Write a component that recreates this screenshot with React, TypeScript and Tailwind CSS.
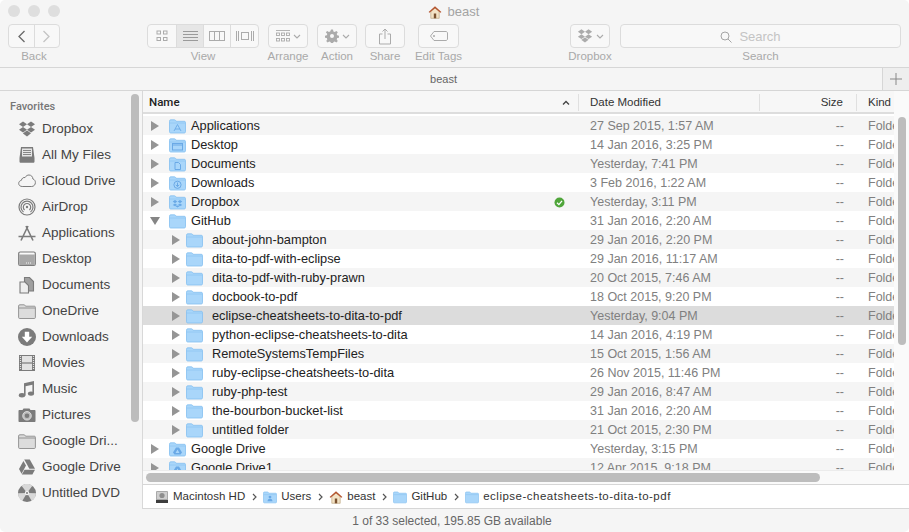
import React from "react";

function DropboxGlyph({ size = 18, color = "#777" }: { size?: number; color?: string }) {
  return (
    <svg width={size} height={size} viewBox="0 0 18 18" fill={color}>
      <path d="M5 1.5 9 4.2 5 7 1 4.2Z" />
      <path d="M13 1.5 17 4.2 13 7 9 4.2Z" />
      <path d="M5 7 9 9.8 5 12.5 1 9.8Z" />
      <path d="M13 7 17 9.8 13 12.5 9 9.8Z" />
      <path d="M5 13.2 9 10.6 13 13.2 9 16.4 5 13.6Z" />
    </svg>
  );
}

type Emblem = "apps" | "desktop" | "docs" | "downloads" | "dropbox" | "gdrive" | "users" | null;

function Folder({ emblem = null, w = 17 }: { emblem?: Emblem; w?: number }) {
  const c = "#6aa9e6";
  return (
    <svg width={w} height={15} viewBox="0 0 17 15" className="shrink-0">
      <path d="M.5 2.2C.5 1.3 1 .8 1.8.8h3.6c.7 0 1 .3 1.3.8l.4.7h8.2c.7 0 1.2.5 1.2 1.2v9.3c0 .7-.5 1.2-1.2 1.2H1.7c-.7 0-1.2-.5-1.2-1.2Z" fill="#a9d6fa" stroke="#84bff0" strokeWidth="0.8" />
      <path d="M.8 4h15.4" stroke="#8fc6f2" strokeWidth="0.8" />
      {emblem === "apps" && <path d="M5 12 8.5 5.5 12 12M6 10h5" fill="none" stroke={c} strokeWidth="0.9" />}
      {emblem === "desktop" && (
        <g fill="none" stroke={c} strokeWidth="1">
          <rect x="3.5" y="5.5" width="10" height="6.5" />
          <path d="M3.5 7h10" />
        </g>
      )}
      {emblem === "docs" && <path d="M6 5.5h3.5L11.5 7.5v5H6Z" fill="none" stroke={c} strokeWidth="1" />}
      {emblem === "downloads" && (
        <g fill="none" stroke={c} strokeWidth="1">
          <circle cx="8.5" cy="8.8" r="3.6" />
          <path d="M8.5 6.5v4M6.8 8.8l1.7 1.8 1.7-1.8" />
        </g>
      )}
      {emblem === "dropbox" && (
        <g fill={c}>
          <path d="M6 5 8.3 6.6 6 8.2 3.7 6.6Z" />
          <path d="M11 5 13.3 6.6 11 8.2 8.7 6.6Z" />
          <path d="M6 8.4 8.3 10 6 11.2 3.7 10Z" />
          <path d="M11 8.4 13.3 10 11 11.2 8.7 10Z" />
          <path d="M6.5 11.3 8.5 10.4l2 .9-2 1.3Z" />
        </g>
      )}
      {emblem === "gdrive" && <path d="M7 5.5h3l3 5-1.5 2h-6L4 10.5ZM8.5 7.5l-2 3.5h4Z" fill={c} fillRule="evenodd" />}
      {emblem === "users" && (
        <g fill={c}>
          <circle cx="8.5" cy="7" r="1.7" />
          <path d="M5.5 12c0-2 1.3-3 3-3s3 1 3 3Z" />
        </g>
      )}
    </svg>
  );
}

function House() {
  return (
    <svg width="14" height="14" viewBox="0 0 14 14" className="shrink-0">
      <path d="M2.8 6.5v6.8h8.4V6.5L7 3Z" fill="#f3e3c6" stroke="#b39a70" strokeWidth="0.6" />
      <path d="M.6 7 7 1.2 13.4 7l-1 .8L7 3.2 1.6 7.8Z" fill="#b5552f" />
      <rect x="5.8" y="8.5" width="2.4" height="4.8" fill="#7a5230" />
    </svg>
  );
}

function HardDisk() {
  return (
    <svg width="14" height="14" viewBox="0 0 14 14" className="shrink-0">
      <rect x="1" y="1" width="12" height="12" rx="1" fill="#a9a9a9" />
      <rect x="2" y="2" width="10" height="7" fill="#cfcfcf" />
      <circle cx="7" cy="5.5" r="2.6" fill="#8e8e8e" />
      <rect x="1" y="10" width="12" height="3" fill="#3d3d3d" />
    </svg>
  );
}

const G = "#7b7b7b";
const sideIcons: Record<string, React.ReactNode> = {
  dropbox: <DropboxGlyph size={18} color={G} />,
  files: (
    <svg width="18" height="18" viewBox="0 0 18 18">
      <path d="M3 1h12l1.5 11v3.5c0 .8-.5 1.3-1.3 1.3H2.8c-.8 0-1.3-.5-1.3-1.3V12Z" fill={G} />
      <rect x="4" y="2.5" width="10" height="8" fill="#e5e5e5" />
      <path d="M5 4.5h8M5 6.5h8M5 8.5h8" stroke={G} strokeWidth="0.9" />
    </svg>
  ),
  cloud: (
    <svg width="18" height="18" viewBox="0 0 18 18">
      <path d="M4.2 14.5c-2 0-3.5-1.3-3.5-3.1 0-1.6 1.1-2.8 2.6-3C3.8 6.3 5.5 5 7 5.6 8 3.8 9.5 3 11 3c2.2 0 3.8 1.7 3.9 4 1.5.4 2.5 1.8 2.5 3.5 0 2.2-1.6 4-3.7 4Z" fill="none" stroke={G} strokeWidth="1" />
    </svg>
  ),
  airdrop: (
    <svg width="18" height="18" viewBox="0 0 18 18" fill="none" stroke={G}>
      <circle cx="9" cy="9" r="8" strokeWidth="1.2" />
      <path d="M5.5 14A6 6 0 1 1 12.5 14" strokeWidth="1.2" />
      <path d="M6.6 12A3.7 3.7 0 1 1 11.4 12" strokeWidth="1.2" />
      <circle cx="9" cy="9" r="1.2" fill={G} stroke="none" />
    </svg>
  ),
  apps: (
    <svg width="18" height="18" viewBox="0 0 18 18" fill="none" stroke={G} strokeWidth="1.6">
      <path d="M3 16.5 10 2M15 16.5 8 2M.5 12.5h17" />
    </svg>
  ),
  desktop: (
    <svg width="18" height="18" viewBox="0 0 18 18">
      <rect x="0.7" y="2" width="16.6" height="13.5" rx="1.5" fill="#fff" fillOpacity="0.5" stroke={G} strokeWidth="1.2" />
      <rect x="1.2" y="4.5" width="15.6" height="10.5" fill="#a8a8a8" />
      <path d="M8 13h.9M10 13h.9M12 13h.9" stroke="#fff" strokeWidth="1.2" />
    </svg>
  ),
  documents: (
    <svg width="18" height="18" viewBox="0 0 18 18" fill="#eee" stroke={G} strokeWidth="1.1">
      <path d="M6.5 1.5h5l4 4v9.5h-9Z" fill="#a0a0a0" />
      <path d="M2 6h5l3.5 3.5v7.5H2Z" />
    </svg>
  ),
  folder: (
    <svg width="18" height="15" viewBox="0 0 18 15">
      <path d="M.6 2c0-.7.4-1.2 1.2-1.2H6c.6 0 .9.3 1.1.7l.4.7h8.8c.7 0 1.1.4 1.1 1.1v10.1c0 .7-.4 1.1-1.1 1.1H1.7c-.7 0-1.1-.4-1.1-1.1Z" fill="#dcdcdc" stroke="#8b8b8b" strokeWidth="0.9" />
      <path d="M.8 4h16.4" stroke="#8b8b8b" strokeWidth="0.9" />
    </svg>
  ),
  downloads: (
    <svg width="18" height="18" viewBox="0 0 18 18">
      <circle cx="9" cy="9" r="9" fill={G} />
      <path d="M6.8 3.8h4.4v5h3L9 14.5 3.8 8.8h3Z" fill="#fff" />
    </svg>
  ),
  movies: (
    <svg width="18" height="18" viewBox="0 0 18 18">
      <rect x="1" y="1" width="16" height="16" fill={G} />
      <rect x="4" y="2" width="10" height="6.4" fill="#e2e2e2" />
      <rect x="4" y="9.6" width="10" height="6.4" fill="#e2e2e2" />
      <path d="M2.5 2v14M15.5 2v14" stroke="#e2e2e2" strokeWidth="1.2" strokeDasharray="1 1" />
    </svg>
  ),
  music: (
    <svg width="18" height="18" viewBox="0 0 18 18" fill={G}>
      <path d="M6 3.2 16 1v12.5h-1.6V4.8L7.6 6.2V15.5H6Z" />
      <ellipse cx="4" cy="15.3" rx="3.2" ry="2.2" />
      <ellipse cx="13" cy="13.6" rx="3.1" ry="2.2" />
    </svg>
  ),
  pictures: (
    <svg width="18" height="18" viewBox="0 0 18 18">
      <path d="M.5 5c0-.6.4-1 1-1h3l1-1.5h6L12.5 4h4c.6 0 1 .4 1 1v10c0 .6-.4 1-1 1h-15c-.6 0-1-.4-1-1Z" fill={G} />
      <circle cx="9" cy="9.8" r="4.3" fill="#bbb" stroke="#e8e8e8" strokeWidth="0.8" />
      <circle cx="9" cy="9.8" r="2.3" fill={G} />
    </svg>
  ),
  gdrive: (
    <svg width="18" height="18" viewBox="0 0 18 18" fill={G}>
      <path d="M6.2 1.5h5.6L17 10.8h-5.6Z" />
      <path d="M5.4 3 8 7.5 3.6 15.8 1 11Z" />
      <path d="M6.5 11.8H17l-2.6 4.7H3.8Z" />
    </svg>
  ),
  dvd: (
    <svg width="18" height="18" viewBox="0 0 18 18">
      <circle cx="9" cy="9" r="9" fill={G} />
      <path d="M9 9 3.6 1.800A9 9 0 0 1 14.4 1.800ZM9 9l9 .2A9 9 0 0 1 13.6 16.800ZM9 9 4.4 16.800A9 9 0 0 1 0 9.200Z" fill="#d8d8d8" />
      <circle cx="9" cy="9" r="2.2" fill="#f0f0f0" />
      <circle cx="9" cy="9" r="1" fill={G} />
    </svg>
  ),
};

const sidebar: [string, string][] = [
  ["dropbox", "Dropbox"],
  ["files", "All My Files"],
  ["cloud", "iCloud Drive"],
  ["airdrop", "AirDrop"],
  ["apps", "Applications"],
  ["desktop", "Desktop"],
  ["documents", "Documents"],
  ["folder", "OneDrive"],
  ["downloads", "Downloads"],
  ["movies", "Movies"],
  ["music", "Music"],
  ["pictures", "Pictures"],
  ["folder", "Google Dri..."],
  ["gdrive", "Google Drive"],
  ["dvd", "Untitled DVD"],
];

type Row = { name: string; date: string; level: 0 | 1; emblem?: Emblem; open?: boolean; synced?: boolean; selected?: boolean };
const rows: Row[] = [
  { name: "Applications", date: "27 Sep 2015, 1:57 AM", level: 0, emblem: "apps" },
  { name: "Desktop", date: "14 Jan 2016, 3:25 PM", level: 0, emblem: "desktop" },
  { name: "Documents", date: "Yesterday, 7:41 PM", level: 0, emblem: "docs" },
  { name: "Downloads", date: "3 Feb 2016, 1:22 AM", level: 0, emblem: "downloads" },
  { name: "Dropbox", date: "Yesterday, 3:11 PM", level: 0, emblem: "dropbox", synced: true },
  { name: "GitHub", date: "31 Jan 2016, 2:20 AM", level: 0, open: true },
  { name: "about-john-bampton", date: "29 Jan 2016, 2:20 PM", level: 1 },
  { name: "dita-to-pdf-with-eclipse", date: "29 Jan 2016, 11:17 AM", level: 1 },
  { name: "dita-to-pdf-with-ruby-prawn", date: "20 Oct 2015, 7:46 AM", level: 1 },
  { name: "docbook-to-pdf", date: "18 Oct 2015, 9:20 PM", level: 1 },
  { name: "eclipse-cheatsheets-to-dita-to-pdf", date: "Yesterday, 9:04 PM", level: 1, selected: true },
  { name: "python-eclipse-cheatsheets-to-dita", date: "14 Jan 2016, 4:19 PM", level: 1 },
  { name: "RemoteSystemsTempFiles", date: "15 Oct 2015, 1:56 AM", level: 1 },
  { name: "ruby-eclipse-cheatsheets-to-dita", date: "26 Nov 2015, 11:46 PM", level: 1 },
  { name: "ruby-php-test", date: "29 Jan 2016, 8:47 AM", level: 1 },
  { name: "the-bourbon-bucket-list", date: "31 Jan 2016, 2:20 AM", level: 1 },
  { name: "untitled folder", date: "21 Oct 2015, 2:30 PM", level: 1 },
  { name: "Google Drive", date: "Yesterday, 3:15 PM", level: 0, emblem: "gdrive" },
  { name: "Google Drive1", date: "12 Apr 2015, 9:18 PM", level: 0, emblem: "gdrive" },
];

const T = "#ababab";

function Tool({ label, width, className = "", children }: { label: string; width: number; className?: string; children: React.ReactNode }) {
  return (
    <div className={`flex flex-col items-center ${className}`} style={{ width }}>
      {children}
      <div className="h-[16px] whitespace-nowrap text-[11.5px] leading-[16px] text-[#a9a9a9]">{label}</div>
    </div>
  );
}

const btn = "flex h-[24px] w-full items-center justify-center rounded-[4px] border border-[#dcdcdc] bg-[#f8f8f8]";

function Chevron() {
  return (
    <svg width="8" height="5" viewBox="0 0 8 5" fill="none" stroke={T} strokeWidth="1.1" className="ml-[3px]">
      <path d="M1 1 4 4 7 1" />
    </svg>
  );
}

function Triangle({ open }: { open?: boolean }) {
  return open ? (
    <svg width="10" height="8" viewBox="0 0 10 8" className="shrink-0">
      <path d="M0 0h10L5 8Z" fill="#858585" />
    </svg>
  ) : (
    <svg width="8" height="10" viewBox="0 0 8 10" className="shrink-0">
      <path d="M0 0 8 5 0 10Z" fill="#959595" />
    </svg>
  );
}

function Crumb({ icon, text, className = "" }: { icon: React.ReactNode; text: string; className?: string }) {
  return (
    <div className="flex items-center gap-[4px] whitespace-nowrap">
      {icon}
      <span className={className}>{text}</span>
    </div>
  );
}

function CrumbSep() {
  return (
    <svg width="5" height="8" viewBox="0 0 5 8" fill="none" stroke="#555" strokeWidth="1.2" className="mx-[6.5px] shrink-0">
      <path d="M1 1 4 4 1 7" />
    </svg>
  );
}

export default function App() {
  return (
    <div className="flex h-[532px] w-[909px] flex-col overflow-hidden rounded-[5px] bg-[#f5f5f5] font-['Liberation_Sans',sans-serif]">
      {/* Title bar */}
      <div className="grid h-[24px] shrink-0 grid-cols-[1fr_auto_1fr] pt-[5px]">
        <div className="flex gap-[8px] pl-[8px]">
          <div className="h-[12px] w-[12px] rounded-full bg-[#dedede]" />
          <div className="h-[12px] w-[12px] rounded-full bg-[#dedede]" />
          <div className="h-[12px] w-[12px] rounded-full bg-[#dedede]" />
        </div>
        <div className="flex h-[14px] items-center gap-[6px] pr-[2px] text-[13px] text-[#a3a3a3]">
          <House />
          <span>beast</span>
        </div>
        <div />
      </div>

      {/* Toolbar */}
      <div className="flex h-[44px] shrink-0 items-start border-b border-[#d6d6d6] pl-[8px]">
        <Tool label="Back" width={52}>
          <div className="flex h-[24px] w-full rounded-[4px] border border-[#dcdcdc] bg-[#f8f8f8]">
            <div className="flex flex-1 items-center justify-center border-r border-[#dcdcdc]">
              <svg width="9" height="13" viewBox="0 0 9 13" fill="none" stroke="#6a6a6a" strokeWidth="1.3"><path d="M7.5 1 2 6.5 7.5 12" /></svg>
            </div>
            <div className="flex flex-1 items-center justify-center">
              <svg width="9" height="13" viewBox="0 0 9 13" fill="none" stroke="#c4c4c4" strokeWidth="1.3"><path d="M1.5 1 7 6.5 1.5 12" /></svg>
            </div>
          </div>
        </Tool>
        <Tool label="View" width={112} className="ml-[87px]">
          <div className="flex h-[24px] w-full overflow-hidden rounded-[4px] border border-[#dcdcdc] bg-[#f8f8f8]">
            <div className="flex w-[29px] items-center justify-center border-r border-[#dcdcdc]">
              <svg width="12" height="12" viewBox="0 0 12 12" fill="none" stroke={T}>
                <rect x="1" y="1" width="3.5" height="3" /><rect x="7.5" y="1" width="3.5" height="3" />
                <rect x="1" y="7.5" width="3.5" height="3" /><rect x="7.5" y="7.5" width="3.5" height="3" />
              </svg>
            </div>
            <div className="flex w-[27px] items-center justify-center border-r border-[#dcdcdc] bg-[#e6e6e6]">
              <svg width="15" height="10" viewBox="0 0 15 10" stroke="#9a9a9a"><path d="M0 .5h15M0 3.5h15M0 6.5h15M0 9.5h15" /></svg>
            </div>
            <div className="flex w-[27px] items-center justify-center border-r border-[#dcdcdc]">
              <svg width="16" height="10" viewBox="0 0 16 10" fill="none" stroke={T}><rect x=".5" y=".5" width="15" height="9" /><path d="M5.5 0v10M10.5 0v10" /></svg>
            </div>
            <div className="flex flex-1 items-center justify-center">
              <svg width="18" height="10" viewBox="0 0 18 10" fill="none" stroke={T}><rect x="5.5" y="1.5" width="7" height="7" /><path d="M.5 0v10M2.5 0v10M15.5 0v10M17.5 0v10" /></svg>
            </div>
          </div>
        </Tool>
        <Tool label="Arrange" width={40} className="ml-[9px]">
          <div className={btn}>
            <svg width="14" height="12" viewBox="0 0 14 12" fill="none" stroke={T} strokeWidth="0.9">
              <path d="M0 .5h14" />
              <rect x=".5" y="3" width="3" height="2.5" /><rect x="5.5" y="3" width="3" height="2.5" /><rect x="10.5" y="3" width="3" height="2.5" />
              <rect x=".5" y="8.5" width="3" height="2.5" /><rect x="5.5" y="8.5" width="3" height="2.5" /><rect x="10.5" y="8.5" width="3" height="2.5" />
            </svg>
            <Chevron />
          </div>
        </Tool>
        <Tool label="Action" width={40} className="ml-[9px]">
          <div className={btn}>
            <svg width="14" height="14" viewBox="0 0 14 14" fill={T}>
              <path fillRule="evenodd" d="M6 .5h2l.4 2 1.3.5 1.7-1.1 1.4 1.4-1.100 1.7.5 1.3 2 .4v2l-2 .4-.5 1.3 1.100 1.7-1.4 1.4-1.7-1.1-1.3.5-.4 2H6l-.4-2-1.3-.5-1.7 1.100-1.4-1.4 1.100-1.7-.5-1.3-2-.4v-2l2-.4.5-1.3L.8 3.3 2.200 1.900l1.7 1.100L5.200 2.500ZM7 5a2 2 0 1 0 0 4 2 2 0 0 0 0-4Z" />
            </svg>
            <Chevron />
          </div>
        </Tool>
        <Tool label="Share" width={40} className="ml-[8px]">
          <div className={btn}>
            <svg width="12" height="17" viewBox="0 0 12 17" fill="none" stroke={T}>
              <path d="M6 11V1M3.5 3.5 6 1l2.5 2.5M3.500 6H.5v10h11V6h-3" />
            </svg>
          </div>
        </Tool>
        <Tool label="Edit Tags" width={41} className="ml-[13px]">
          <div className={btn}>
            <svg width="18" height="10" viewBox="0 0 18 10" fill="none" stroke={T}>
              <path d="M4 .5h12c.8 0 1.5.7 1.5 1.500v6c0 .8-.7 1.500-1.500 1.500H4L.5 5Z" />
              <circle cx="4" cy="5" r=".6" fill={T} />
            </svg>
          </div>
        </Tool>
        <Tool label="Dropbox" width={40} className="ml-[111px]">
          <div className={btn}>
            <DropboxGlyph size={16} color={T} />
            <Chevron />
          </div>
        </Tool>
        <Tool label="Search" width={281} className="ml-[10px]">
          <div className={`${btn} gap-[7px] pt-[1px] pr-[20px] text-[13px] text-[#c4c4c4]`}>
            <svg width="12" height="12" viewBox="0 0 12 12" fill="none" stroke="#a5a5a5" strokeWidth="1"><circle cx="5" cy="5" r="4" /><path d="m8 8 3.5 3.5" /></svg>
            <span>Search</span>
          </div>
        </Tool>
      </div>

      {/* Tab bar */}
      <div className="flex h-[23px] shrink-0 border-b border-[#d6d6d6]">
        <div className="flex flex-1 items-center justify-center pl-[5px] text-[11px] text-[#666]">beast</div>
        <div className="flex w-[27px] items-center justify-center border-l border-[#d6d6d6] bg-[#eeeeee]">
          <svg width="12" height="12" viewBox="0 0 12 12" stroke="#888"><path d="M6 0v12M0 6h12" /></svg>
        </div>
      </div>

      {/* Body */}
      <div className="flex min-h-0 flex-1">
        {/* Sidebar */}
        <div className="relative flex w-[143px] shrink-0 flex-col border-r border-[#d8d8d8] bg-[#f5f5f5] pt-[9px]">
          <div className="mb-[2px] pl-[10px] font-['Roboto',sans-serif] text-[11px] leading-[14px] font-medium text-[#777]">Favorites</div>
          <div className="flex flex-col">
            {sidebar.map(([icon, label], i) => (
              <div key={i} className="flex h-[26px] items-center pl-[18px] text-[13.5px] text-[#444]">
                <span className="flex w-[18px] shrink-0 justify-center">{sideIcons[icon]}</span>
                <span className="ml-[6px] whitespace-nowrap">{label}</span>
              </div>
            ))}
          </div>
          <div className="absolute top-[3px] left-[131px] h-[328px] w-[8px] rounded-full bg-[#bcbcbc]" />
        </div>

        {/* List */}
        <div className="relative flex min-w-0 flex-1 flex-col bg-white">
          <div className="flex h-[23px] w-[751px] shrink-0 items-center border-b-2 border-[#dddddd] bg-[#f7f7f7] pt-[2px] text-[11.5px] text-[#333]">
            <div className="flex h-[17px] w-[436px] items-center justify-between border-r border-[#e0e0e0] pr-[8px] pl-[6px]">
              <span className="font-['Roboto',sans-serif] font-medium text-[#222]">Name</span>
              <svg width="8" height="5" viewBox="0 0 8 5" fill="none" stroke="#444" strokeWidth="1.3"><path d="M1 4.5 4 1.5 7 4.5" /></svg>
            </div>
            <div className="flex h-[17px] w-[181px] items-center border-r border-[#e0e0e0] pl-[11px]">Date Modified</div>
            <div className="flex h-[17px] w-[97px] items-center justify-end border-r border-[#e0e0e0] pr-[13px]">Size</div>
            <div className="pl-[11px]">Kind</div>
          </div>
          <div className="h-[356px] w-[751px] shrink-0 overflow-hidden pt-[2px]">
            {rows.map((r, i) => (
              <div
                key={r.name}
                className={`flex h-[19px] items-center pt-[1px] text-[12.5px] ${r.selected ? "bg-[#dcdcdc]" : i % 2 === 0 ? "bg-[#f5f5f5]" : "bg-white"}`}
              >
                <div className="flex w-[436px] shrink-0 items-center">
                  <span className={`flex justify-center ${r.level === 1 ? "ml-[28px] w-[10px]" : "ml-[7px] w-[10px]"}`}>
                    <Triangle open={r.open} />
                  </span>
                  <span className={r.level === 1 ? "ml-[5px]" : "ml-[9px]"}>
                    <Folder emblem={r.emblem ?? null} />
                  </span>
                  <span className={`whitespace-nowrap text-[12.8px] text-[#222] ${r.level === 1 ? "ml-[9px]" : "ml-[5px]"}`}>{r.name}</span>
                  {r.synced && (
                    <svg width="11" height="11" viewBox="0 0 11 11" className="mr-[14px] ml-auto">
                      <circle cx="5.5" cy="5.5" r="5" fill="#4fa53a" />
                      <path d="M3 5.7 4.9 7.6 8 3.8" fill="none" stroke="#fff" strokeWidth="1.3" />
                    </svg>
                  )}
                </div>
                <div className="w-[181px] shrink-0 pl-[11px] whitespace-nowrap text-[#808080]">{r.date}</div>
                <div className="w-[97px] shrink-0 pr-[13px] text-right text-[#808080]">--</div>
                <div className="w-[37px] shrink-0 overflow-hidden pl-[11px] text-[#808080]">Folder</div>
              </div>
            ))}
          </div>
          {/* Horizontal scroller */}
          <div className="flex h-[14px] shrink-0 items-center border-t border-[#ececec] bg-[#fafafa] pl-[3px]">
            <div className="h-[9px] w-[674px] rounded-full bg-[#bdbdbd]" />
          </div>
          {/* Path bar */}
          <div className="flex h-[25px] shrink-0 items-center border-y border-[#d6d6d6] bg-white pt-[1px] pl-[12px] text-[11.5px] text-[#333]">
            <Crumb icon={<HardDisk />} text="Macintosh HD" />
            <CrumbSep />
            <Crumb icon={<Folder emblem="users" w={14} />} text="Users" />
            <CrumbSep />
            <Crumb icon={<House />} text="beast" />
            <CrumbSep />
            <Crumb icon={<Folder w={14} />} text="GitHub" />
            <CrumbSep />
            <Crumb icon={<Folder w={14} />} text="eclipse-cheatsheets-to-dita-to-pdf" className="tracking-[0.5px]" />
          </div>
          {/* Right gutter with the vertical scroller */}
          <div className="absolute top-0 right-0 h-[393px] w-[15px] bg-[#fafafa]">
            <div className="absolute top-[26px] left-[4px] h-[228px] w-[8px] rounded-full bg-[#bdbdbd]" />
          </div>
        </div>
      </div>

      {/* Status */}
      <div className="flex h-[23px] shrink-0 items-center justify-center pr-[5px] text-[12px] text-[#666]">1 of 33 selected, 195.85 GB available</div>
    </div>
  );
}
